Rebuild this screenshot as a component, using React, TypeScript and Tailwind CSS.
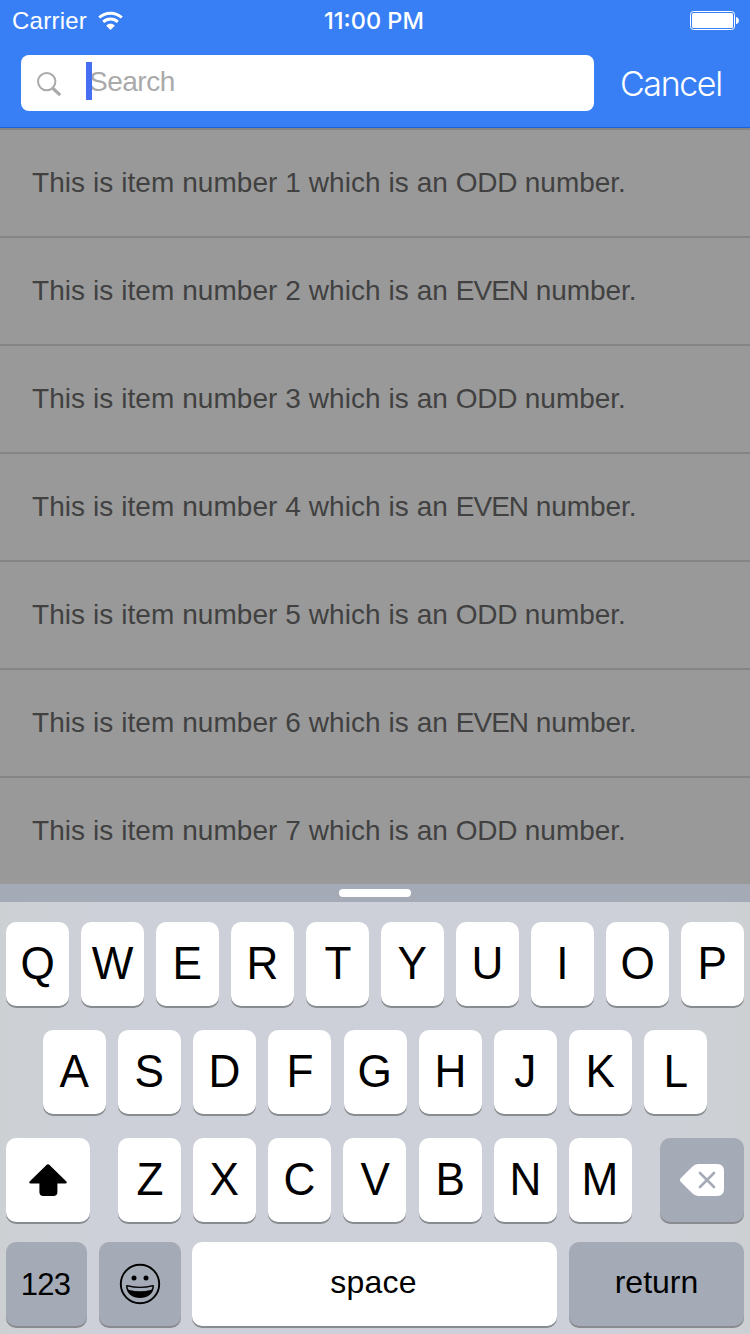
import React from "react";

const items = [1, 2, 3, 4, 5, 6, 7];

function Key({ children, className = "w-[63px] bg-white" }: { children?: React.ReactNode; className?: string }) {
  return (
    <button
      className={`flex h-[84px] shrink-0 items-center justify-center rounded-[10px] text-[45.500px] leading-none text-black shadow-[0_2px_0_#888b8f] ${className}`}
    >
      {children}
    </button>
  );
}

function Letter({ value }: { value: string }) {
  return (
    <Key>
      <span className="scale-x-97">{value}</span>
    </Key>
  );
}

function StatusBar() {
  return (
    <div className="grid h-[42px] grid-cols-3 items-center pr-[11px] pl-3 text-white">
      <div className="flex items-center">
        <span className="text-[24px] leading-none tracking-[0.25px]">Carrier</span>
        <svg className="-mt-[2px] ml-[11px]" width="25" height="19" viewBox="0 0 25 19" fill="none" stroke="#fff">
          <path d="M1.200 6.500C7.600.7 17.400.7 23.800 6.500" strokeWidth="3" />
          <path d="M5.200 10.900c4.200-3.900 10.400-3.900 14.600 0" strokeWidth="2.800" />
          <path d="M8.200 14.700c2.400-2.600 6.200-2.600 8.600 0L12.500 19z" fill="#fff" stroke="none" />
        </svg>
      </div>
      <span className="-ml-[3px] text-center font-['Inter',sans-serif] text-[23.500px] leading-none font-medium">11:00 PM</span>
      <svg className="-mt-px justify-self-end" width="49" height="19" viewBox="0 0 49 19">
        <rect x=".5" y=".5" width="44" height="18" rx="3" fill="none" stroke="#fff" />
        <rect x="2" y="2" width="41" height="15" rx="1.500" fill="#fff" />
        <path d="M46 6h.5q2.500 1 2.500 3.500T46.500 13H46z" fill="#fff" />
      </svg>
    </div>
  );
}

export default function App() {
  return (
    <div className="flex h-[1334px] w-[750px] flex-col overflow-hidden bg-[#999] font-['Liberation_Sans',Arial,sans-serif]">
      <header className="h-32 border-b border-[#1f60d8] bg-[#387ff5]">
        <StatusBar />
        <div className="flex pt-[13px] pl-[21px]">
          <div className="flex h-14 w-[573px] items-center rounded-[8px] bg-white pl-4">
            <svg className="mt-px" width="25" height="26" viewBox="0 0 25 26" fill="none" stroke="#aaa">
              <circle cx="9.700" cy="10.600" r="8.700" strokeWidth="2" />
              <path d="m15.500 17 7.700 7.200" strokeWidth="3.200" />
            </svg>
            <div className="relative ml-[28px] text-[28px] leading-none text-[#aaa]">
              <span className="relative -top-px -left-px tracking-[-0.500px]">Search</span>
              <span className="absolute top-[-7px] left-[-4px] h-[38px] w-[6px] bg-[#466ef0]" />
            </div>
          </div>
          <span className="ml-[26px] pt-[9px] font-['Inter',sans-serif] text-[34px] leading-[40px] font-light tracking-[-1.400px] text-white">Cancel</span>
        </div>
      </header>

      <ul>
        {items.map((n) => (
          <li key={n} className="flex h-[108px] items-center border-t-2 border-[#858585] pl-8 text-[28px] leading-8 whitespace-nowrap text-[#414141]">
            <p className="tracking-[0.060px]">
              This is item number {n} which is an{" "}
              <span className={n % 2 ? "tracking-[-0.300px]" : "tracking-[-1px]"}>{n % 2 ? "ODD" : "EVEN"}</span>
              <span className="tracking-[-0.050px]"> number.</span>
            </p>
          </li>
        ))}
      </ul>

      <div className="flex h-[18px] shrink-0 items-center justify-center bg-[#a4abb7]">
        <div className="h-2 w-[72px] rounded-[4px] bg-white" />
      </div>
      <div className="flex flex-1 flex-col bg-[linear-gradient(to_right,#cdd0d3,#cdd0d9_15%,#cdd0d9_80%,#cdd0d3)] px-[6px] pt-5">
        <div className="flex justify-between">
          {"QWERTYUIOP".split("").map((c) => (
            <Letter key={c} value={c} />
          ))}
        </div>
        <div className="mt-6 flex justify-between px-[37px]">
          {"ASDFGHJKL".split("").map((c) => (
            <Letter key={c} value={c} />
          ))}
        </div>
        <div className="mt-6 flex justify-between">
          <Key className="w-[84px] bg-white">
            <svg width="38" height="32" viewBox="0 0 38 32">
              <path d="M18 .6q1-.9 2 0L37.400 17.500q1 2-1 2h-8V28q0 4-4 4h-10q-4 0-4-4v-8.500H1.600q-2 0-1-2z" />
            </svg>
          </Key>
          <div className="flex w-[514px] justify-between">
            {"ZXCVBNM".split("").map((c) => (
              <Letter key={c} value={c} />
            ))}
          </div>
          <Key className="w-[84px] bg-[#a4abb7]">
            <svg width="44" height="32" viewBox="0 0 44 32">
              <path d="M.5 14.500 12 3q3-3 6-3h19q7 0 7 7v18q0 7-7 7H18q-3 0-6-3L.5 17.500q-1-1.500 0-3z" fill="#fff" />
              <path d="m20 9 14 14M34 9 20 23" stroke="#a4abb7" strokeWidth="2.600" strokeLinecap="round" />
            </svg>
          </Key>
        </div>
        <div className="mt-5 flex">
          <Key className="w-[81px] bg-[#a4abb7]">
            <span className="-ml-[2px] text-[31px] tracking-[-0.700px]">123</span>
          </Key>
          <Key className="ml-3 w-[82px] bg-[#a4abb7]">
            <svg width="42" height="42" viewBox="0 0 42 42">
              <circle cx="21" cy="21" r="19.200" fill="none" stroke="#000" strokeWidth="1.900" />
              <circle cx="15" cy="15" r="2.500" />
              <circle cx="27" cy="15" r="2.500" />
              <path d="M8.200 22q12.800 3.600 25.600 0 1.200 0 1.200 1.200C34.500 30.500 28.500 35 21 35S7.500 30.500 7 23.200Q7 22 8.200 22z" />
              <path d="M8.500 23.500q12.500 3.200 25 0-.1 1.700-1.200 3.300-11.300 3-22.600 0-1.100-1.600-1.200-3.300z" fill="#a4abb7" />
            </svg>
          </Key>
          <Key className="ml-[11px] w-[365px] bg-white">
            <span className="-mt-1 -ml-[2px] text-[32px] tracking-[0.250px]">space</span>
          </Key>
          <Key className="ml-3 w-[175px] bg-[#a4abb7]">
            <span className="-mt-1 text-[32px]">return</span>
          </Key>
        </div>
      </div>
    </div>
  );
}
